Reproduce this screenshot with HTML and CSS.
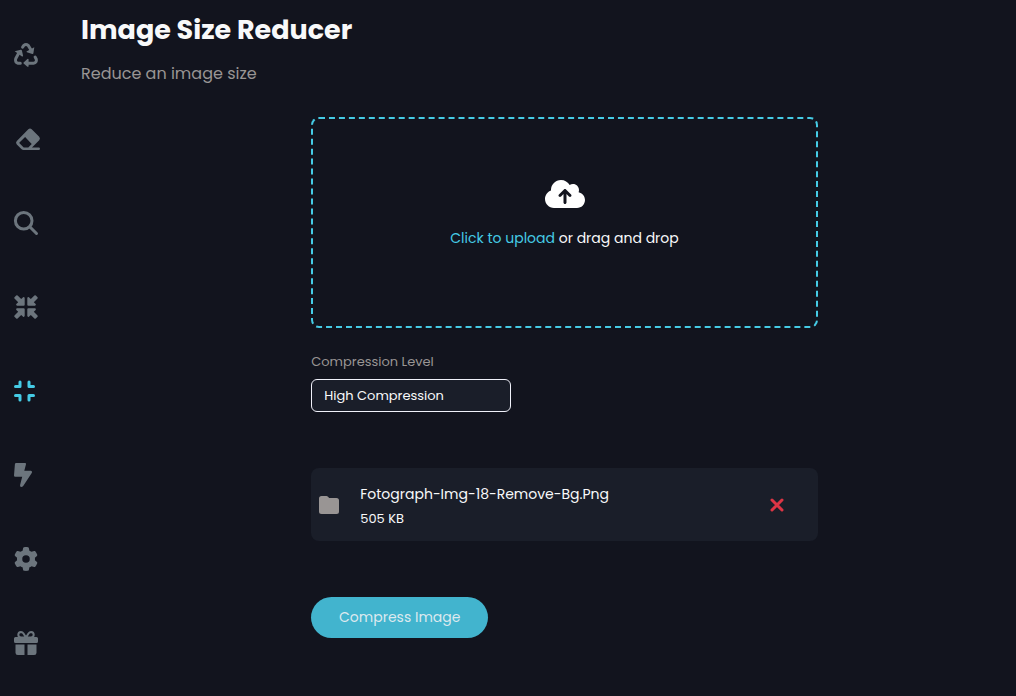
FILE: index.html
```html
<!DOCTYPE html>
<html lang="en">
<head>
<meta charset="utf-8">
<meta name="viewport" content="width=device-width, initial-scale=1">
<title>Image Size Reducer</title>
<link rel="stylesheet" href="styles.css">
</head>
<body>
<div class="app">
  <nav class="sidebar" aria-label="Tools">
    <a href="#convert" aria-label="Convert"><svg class="icon" viewBox="0 0 24 24"><g fill="none" stroke="currentColor" stroke-width="3" stroke-linecap="round" stroke-linejoin="round"><path d="M8.6 4.2 9.8 2.4Q12 .6 14.2 2.4L17 7"/><path d="M4.8 10 1.8 15.400Q.6 19.300 4 20.200H6.300"/><path d="M21.100 14 22.300 16.300Q23 19.700 19.500 20.200H14"/></g><path d="M20.300 4.200 19.400 10.300Q19.200 11.200 18.300 10.900L12.900 9.300Q12 8.800 12.900 8.200ZM.7 8.200 6.700 6.700Q7.600 6.600 7.900 7.500L9.100 12.800Q9 13.900 8 13.400ZM14.600 16.400V23.200Q14.300 24.200 13.400 23.700L9.600 20.600Q9.200 20.100 9.600 19.500L13.400 16Q14.400 15.600 14.600 16.400Z"/></svg></a>
    <a href="#erase" aria-label="Remove background"><svg class="icon icon-eraser" viewBox="0 0 24 24"><path fill-rule="evenodd" d="M12.300 2.300Q14 .8 15.700 2.300L23.200 9.800Q24.700 11.500 23.200 13.200L16 20.500H22.800Q24 20.600 24 21.800T22.800 23.100H7.400Q6.500 23.100 5.600 22.300L.8 17.500Q-.8 15.700.8 14ZM9.100 10 3.500 15.500Q3.200 15.900 3.500 16.200L7.700 20.400H12.300L15.700 17Z"/></svg></a>
    <a href="#enhance" aria-label="Search"><svg class="icon" viewBox="0 0 24 24"><g fill="none" stroke="currentColor" stroke-width="3" stroke-linecap="round"><circle cx="9.700" cy="9.700" r="8.300"/><path d="m16 16 6.500 6.500"/></g></svg></a>
    <a href="#resize" aria-label="Resize"><svg class="icon" viewBox="0 0 24 24"><g id="arrow"><path d="M10.700 3.200V9.700Q10.700 10.700 9.700 10.700H3.100Q1.500 10.500 2.300 9.100L4.200 7.200.5 3.600Q-.2 2.900.5 2.200L2.200.5Q2.900-.2 3.600.5L7.200 4.100 9.100 2.300Q10.400 1.600 10.700 3.200Z"/></g><use href="#arrow" transform="matrix(-1 0 0 1 24 0)"/><use href="#arrow" transform="matrix(1 0 0 -1 0 24)"/><use href="#arrow" transform="matrix(-1 0 0 -1 24 24)"/></svg></a>
    <a class="active" href="#compress" aria-label="Compress" aria-current="page"><svg class="icon" viewBox="0 0 24 24"><path fill="none" stroke="currentColor" stroke-width="3" stroke-linecap="round" stroke-linejoin="round" d="M6 3V7.500H1.500M15 3V7.500H19.500M1.500 16.500H6V21M19.500 16.500H15V21"/></svg></a>
    <a href="#boost" aria-label="Boost"><svg class="icon" viewBox="0 0 24 24"><path d="M2.200 0H11Q12.300 0 12 1.200L10.300 7.700H16.900Q18.600 8.100 17.900 9.700L9.200 23Q8.300 24.100 7 24 5.700 23.600 6.100 22.100L8.200 13.800H1.300Q0 13.700 0 12.400L.9 1.200Q1 0 2.200 0Z"/></svg></a>
    <a href="#settings" aria-label="Settings"><svg class="icon" viewBox="0 0 512 512"><path d="M495.900 166.600c3.200 8.700.5 18.400-6.400 24.600l-43.300 39.400c1.100 8.300 1.700 16.800 1.700 25.400s-.6 17.100-1.700 25.400l43.300 39.400c6.900 6.200 9.600 15.900 6.400 24.600c-4.400 11.900-9.700 23.300-15.800 34.300l-4.700 8.100c-6.600 11-14 21.400-22.100 31.200c-5.900 7.200-15.700 9.600-24.500 6.800l-55.700-17.700c-13.400 10.300-28.200 18.900-44 25.400l-12.500 57.100c-2 9.100-9 16.300-18.200 17.800c-13.800 2.300-28 3.500-42.500 3.500s-28.700-1.200-42.500-3.500c-9.200-1.500-16.200-8.700-18.200-17.800l-12.500-57.100c-15.800-6.500-30.600-15.100-44-25.400L83.100 425.900c-8.800 2.800-18.600.3-24.500-6.800c-8.100-9.800-15.500-20.200-22.100-31.200l-4.700-8.100c-6.100-11-11.400-22.400-15.800-34.300c-3.200-8.700-.5-18.400 6.400-24.600l43.300-39.400C64.600 273.100 64 264.600 64 256s.6-17.100 1.700-25.400L22.400 191.200c-6.900-6.200-9.600-15.900-6.400-24.600c4.400-11.900 9.700-23.300 15.800-34.300l4.700-8.100c6.600-11 14-21.400 22.100-31.200c5.900-7.200 15.700-9.600 24.500-6.800l55.700 17.700c13.400-10.300 28.200-18.900 44-25.400l12.500-57.100c2-9.100 9-16.300 18.200-17.800C227.300 1.200 241.500 0 256 0s28.700 1.200 42.500 3.500c9.200 1.500 16.200 8.700 18.200 17.800l12.500 57.100c15.800 6.500 30.600 15.100 44 25.400l55.700-17.700c8.800-2.800 18.600-.3 24.500 6.800c8.100 9.800 15.500 20.200 22.100 31.200l4.700 8.100c6.100 11 11.400 22.400 15.800 34.300zM256 336a80 80 0 1 0 0-160 80 80 0 1 0 0 160z"/></svg></a>
    <a href="#gift" aria-label="Rewards"><svg class="icon" viewBox="0 0 24 24"><path d="M1.500 6H22.500Q24 6 24 7.500V10.500Q24 12 22.500 12H1.500Q0 12 0 10.500V7.500Q0 6 1.500 6ZM1.500 13.500H10.500V24H3.800Q1.500 24 1.500 21.800ZM13.500 13.500H22.500V21.800Q22.500 24 20.200 24H13.500Z"/><path fill="none" stroke="currentColor" stroke-width="2" stroke-linejoin="round" d="M12 6.500H7Q4.300 6.300 4.300 3.800T7 1.100Q8.500 1.100 9.500 2.500ZM12 6.500H17Q19.700 6.300 19.700 3.800T17 1.100Q15.500 1.100 14.500 2.500Z"/></svg></a>
  </nav>
  <main class="main">
    <h1>Image Size Reducer</h1>
    <p class="subtitle">Reduce an image size</p>
    <form class="reducer">
      <label class="dropzone">
        <input class="file-input" type="file" accept="image/*">
        <svg class="cloud" viewBox="0 32 640 448" aria-hidden="true"><path d="M144 480C64.500 480 0 415.500 0 336c0-62.800 40.200-116.200 96.200-135.900c-.1-2.700-.2-5.400-.2-8.100c0-88.400 71.600-160 160-160c59.300 0 111 32.200 138.700 80.200C409.900 102 428.300 96 448 96c53 0 96 43 96 96c0 12.200-2.300 23.800-6.400 34.600C596 238.400 640 290.100 640 352c0 70.700-57.300 128-128 128H144zm79-217c-9.400 9.400-9.400 24.600 0 33.900s24.600 9.400 33.900 0l39-39V392c0 13.300 10.700 24 24 24s24-10.700 24-24V257.900l39 39c9.400 9.400 24.600 9.400 33.900 0s9.400-24.600 0-33.900l-80-80c-9.400-9.400-24.600-9.400-33.900 0l-80 80z"/></svg>
        <span><span class="accent">Click to upload</span> or drag and drop</span>
      </label>
      <label class="field-label" for="level">Compression Level</label>
      <select class="level" id="level">
        <option>High Compression</option>
        <option>Medium Compression</option>
        <option>Low Compression</option>
      </select>
      <section class="file" aria-label="Selected file">
        <svg class="folder" viewBox="0 0 20 18" aria-hidden="true"><path d="M2.500 0H7.500Q8.300 0 9 .7L10.200 1.900H17.500Q20 1.900 20 4.400V15.500Q20 18 17.500 18H2.500Q0 18 0 15.500V2.500Q0 0 2.500 0Z"/></svg>
        <div class="file-text">
          <div class="file-name">Fotograph-Img-18-Remove-Bg.Png</div>
          <div class="file-size">505 KB</div>
        </div>
        <button class="remove" type="button" aria-label="Remove file"><svg viewBox="0 0 14 14"><path d="m2 2 10 10M12 2 2 12"/></svg></button>
      </section>
      <button class="submit" type="button">Compress Image</button>
    </form>
  </main>
</div>
</body>
</html>
```
FILE: styles.css
```css
* { box-sizing: border-box; }
body {
  margin: 0;
  background: #12141e;
  color: #f8f9fa;
  font-family: Poppins, Inter, "Open Sans", sans-serif;
}
.app { display: flex; min-height: 100vh; }
.sidebar {
  flex: none;
  width: 65px;
  padding: 43px 14px 0;
  display: flex;
  flex-direction: column;
  gap: 60px;
}
.sidebar a { display: block; height: 24px; color: #6c757d; }
.sidebar a.active { color: #45cbe5; }
.icon { display: block; width: 24px; height: 24px; fill: currentColor; overflow: visible; }
.icon-eraser { margin-left: 2px; }
.main { flex: 1; min-width: 0; padding: 9px 14px 32px 16px; }
h1 { margin: 0; font-size: 27px; line-height: 42px; font-weight: 700; }
.subtitle { margin: 11px 0 0; font-size: 16px; line-height: 24px; color: #999594; }
.reducer {
  width: 55%;
  margin: 31px 0 0 25%;
  display: flex;
  flex-direction: column;
  align-items: flex-start;
}
.dropzone {
  position: relative;
  width: 100%;
  padding: 61px 16px 77px;
  border: 2px dashed #45cbe5;
  border-radius: 8px;
  display: flex;
  flex-direction: column;
  align-items: center;
  gap: 20px;
  font-size: 14px;
  line-height: 21px;
  cursor: pointer;
}
.file-input { position: absolute; width: 1px; height: 1px; opacity: 0; }
.cloud { width: 40px; height: 28px; fill: #fff; }
.accent { color: #45cbe5; }
.field-label { margin-top: 24px; font-size: 13px; line-height: 20px; color: #999594; }
.level {
  appearance: none;
  margin-top: 7px;
  width: 200px;
  height: 33px;
  padding: 0 12px;
  border: 1px solid #f0f1fa;
  border-radius: 6px;
  background: #1a1e29;
  color: #f8f9fa;
  font-family: inherit;
  font-size: 13px;
}
.file {
  width: 100%;
  margin-top: 56px;
  padding: 12px 33px 11px 8px;
  border-radius: 8px;
  background: #1a1e29;
  display: flex;
  align-items: center;
}
.folder { flex: none; width: 20px; height: 18px; margin-right: 21px; fill: #999594; }
.file-text { flex: 1; min-width: 0; }
.file-name { font-size: 14px; line-height: 28px; }
.file-size { font-size: 13px; line-height: 22px; }
.remove { padding: 1px; border: 0; background: none; cursor: pointer; }
.remove svg { display: block; width: 14px; height: 14px; fill: none; stroke: #dc3545; stroke-width: 3; stroke-linecap: round; }
.submit {
  margin-top: 56px;
  height: 41px;
  min-width: 177px;
  padding: 0 24px;
  border: 0;
  border-radius: 24px;
  background: #42b4ce;
  color: #dce9ef;
  font-family: inherit;
  font-size: 14px;
  cursor: pointer;
}
```
